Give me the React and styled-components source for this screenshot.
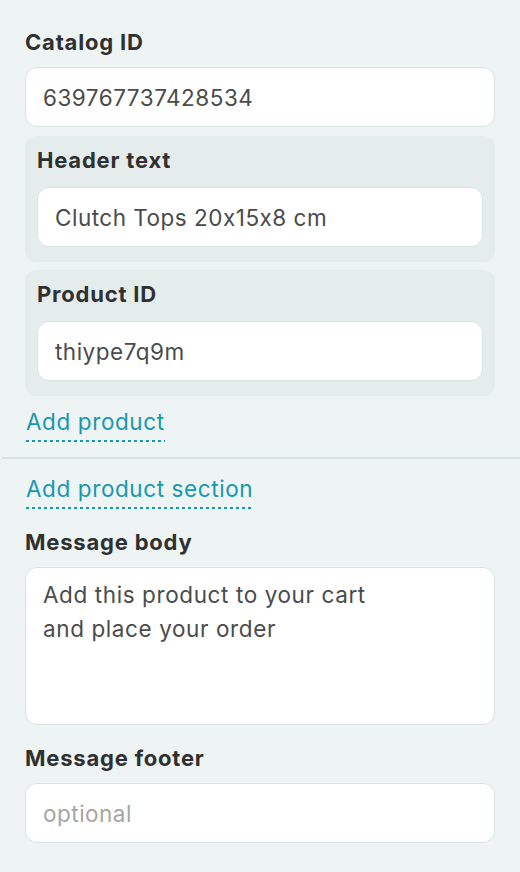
import React from "react";
import styled, { createGlobalStyle } from "styled-components";

const GlobalStyle = createGlobalStyle`
  html, body {
    margin: 0;
    padding: 0;
    background: #eef3f3;
  }
  * {
    box-sizing: border-box;
  }
`;

const Page = styled.div`
  display: flex;
  flex-direction: column;
  width: 520px;
  min-height: 872px;
  padding: 28px 25px 0 25px;
  font-family: Inter, "Noto Sans", sans-serif;
  font-feature-settings: "calt" 0;
  background: #eef3f3;
`;

const Field = styled.div`
  display: flex;
  flex-direction: column;
  gap: ${(p) => p.gap || 11}px;
  margin-bottom: ${(p) => p.mb || 0}px;
`;

const Label = styled.label`
  font-size: 22px;
  line-height: 28px;
  font-weight: 700;
  letter-spacing: 0.8px;
  color: #2f3030;
`;

const Input = styled.input`
  width: 100%;
  height: 60px;
  padding: 0 17px;
  border: 1.5px solid #d6e5e2;
  border-radius: 12px;
  background: #ffffff;
  font-family: inherit;
  font-feature-settings: "calt" 0;
  font-size: 22.5px;
  letter-spacing: 0.5px;
  color: #4a4b4b;
  outline: none;

  &::placeholder {
    color: #a3a6a6;
  }
`;

const TextArea = styled.textarea`
  width: 100%;
  height: 158px;
  padding: 10px 17px;
  border: 1.5px solid #d6e5e2;
  border-radius: 12px;
  background: #ffffff;
  font-family: inherit;
  font-size: 22.5px;
  letter-spacing: 0.6px;
  line-height: 34px;
  color: #4a4b4b;
  resize: none;
  outline: none;
`;

const Group = styled.div`
  display: flex;
  flex-direction: column;
  gap: 13px;
  padding: 10px 12px 15px 12px;
  border-radius: 12px;
  background: #e5ecec;
  margin-bottom: ${(p) => p.mb || 0}px;
`;

const LinkRow = styled.div`
  display: flex;
  margin-top: ${(p) => p.mt || 0}px;
  margin-bottom: ${(p) => p.mb || 0}px;
`;

const AddLink = styled.a`
  display: inline-block;
  margin-left: 1px;
  padding-bottom: 6px;
  font-size: 22.5px;
  letter-spacing: 0.6px;
  line-height: 28px;
  color: #1699ae;
  cursor: pointer;
  background-image: linear-gradient(to right, #1699ae 50%, transparent 50%);
  background-size: 6px 2px;
  background-repeat: repeat-x;
  background-position: 0 100%;
`;

const Divider = styled.hr`
  margin: 0 0 0 -23px;
  width: 518px;
  border: none;
  height: 2px;
  background: #d6e3e1;
`;

export default function App() {
  return (
    <>
      <GlobalStyle />
      <Page>
        <Field mb={9}>
          <Label>Catalog ID</Label>
          <Input defaultValue="639767737428534" />
        </Field>

        <Group mb={8}>
          <Label>Header text</Label>
          <Input defaultValue="Clutch Tops 20x15x8 cm" />
        </Group>

        <Group>
          <Label>Product ID</Label>
          <Input defaultValue="thiype7q9m" />
        </Group>

        <LinkRow mt={12} mb={15}>
          <AddLink>Add product</AddLink>
        </LinkRow>

        <Divider />

        <LinkRow mt={16} mb={19}>
          <AddLink>Add product section</AddLink>
        </LinkRow>

        <Field mb={19}>
          <Label>Message body</Label>
          <TextArea
            defaultValue={"Add this product to your cart\nand place your order"}
          />
        </Field>

        <Field>
          <Label>Message footer</Label>
          <Input placeholder="optional" />
        </Field>
      </Page>
    </>
  );
}
